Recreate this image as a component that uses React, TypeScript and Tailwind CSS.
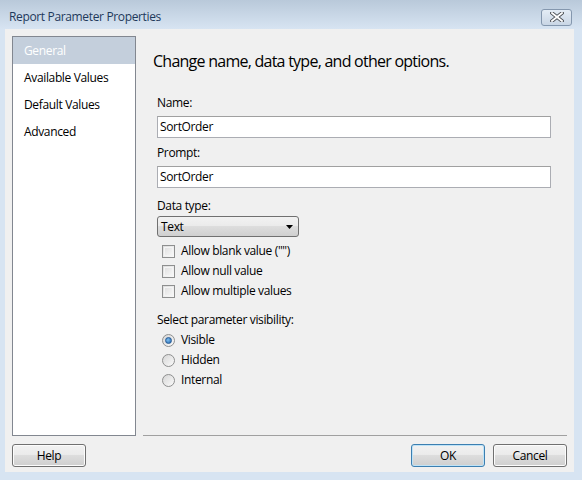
import React from "react";

const navItems = ["General", "Available Values", "Default Values", "Advanced"];

function Checkbox({ label }: { label: string }) {
  return (
    <div className="flex items-center h-[20px] pl-[5px]">
      <span className="w-[13px] h-[13px] border border-[#8e8f8f] bg-gradient-to-br from-[#dcdcdc] to-[#fbfbfb] p-[1px]">
        <span className="block w-full h-full border border-[#f4f4f4]" />
      </span>
      <span className="ml-[6px]">{label}</span>
    </div>
  );
}

function Radio({ label, checked }: { label: string; checked?: boolean }) {
  return (
    <div className="flex items-center h-[20px] pl-[5px]">
      <span className="w-[13px] h-[13px] rounded-full border border-[#8e8f8f] bg-gradient-to-br from-[#d6d6d6] to-[#fbfbfb] flex items-center justify-center">
        {checked && (
          <span className="w-[7px] h-[7px] rounded-full bg-[radial-gradient(circle_at_40%_40%,#7ec0f2,#1d5fa6)] border border-[#275b95]" />
        )}
      </span>
      <span className="ml-[6px]">{label}</span>
    </div>
  );
}

function Button({ label, primary }: { label: string; primary?: boolean }) {
  return (
    <button
      className={
        "w-[74px] h-[23px] rounded-[3px] border text-[12px] text-black bg-[linear-gradient(#f2f2f2_0%,#ebebeb_45%,#dddddd_50%,#cfcfcf_100%)] " +
        (primary ? "border-[#3c7fb1] shadow-[inset_0_0_0_1px_#bfe3f7]" : "border-[#707070] shadow-[inset_0_0_0_1px_#fcfcfc]")
      }
    >
      {label}
    </button>
  );
}

export default function App() {
  return (
    <div className="w-[582px] h-[480px] bg-[#d7e4f2] flex flex-col text-[12px] tracking-[-0.35px] text-black font-['Open_Sans','Noto_Sans',sans-serif] overflow-hidden">
      {/* Title bar */}
      <div className="h-[29px] bg-gradient-to-b from-[#b9c9da] to-[#d7e4f2] flex items-center justify-between pl-[9px] pr-[10px] shrink-0">
        <span className="text-[#1e395b] mt-[5px]">Report Parameter Properties</span>
        <button className="w-[31px] h-[17px] mt-[5px] rounded-[3px] border border-[#8497ae] bg-gradient-to-b from-[#e4ecf5] to-[#c9d6e5] flex items-center justify-center">
          <svg width="14" height="10" viewBox="0 0 14 10">
            <path d="M2 1 L12 9 M12 1 L2 9" stroke="#4b4f55" strokeWidth="3.6" strokeLinecap="square" />
            <path d="M2 1 L12 9 M12 1 L2 9" stroke="#ffffff" strokeWidth="1.8" strokeLinecap="square" />
          </svg>
        </button>
      </div>

      {/* Client area */}
      <div className="flex-1 ml-[5px] mr-[8px] mb-[8px] bg-[#f0f0f0] flex flex-col">
        <div className="flex pt-[7px] pl-[7px] pr-[7px]">
          {/* Sidebar */}
          <div className="w-[124px] h-[400px] border border-[#828790] bg-white shrink-0">
            {navItems.map((item, i) => (
              <div
                key={item}
                className={
                  "h-[27px] flex items-center pl-[11px] " + (i === 0 ? "bg-[#c4cfdc] text-white" : "")
                }
              >
                {item}
              </div>
            ))}
          </div>

          {/* Right panel */}
          <div className="flex-1 ml-[7px] h-[400px] border-b border-[#a0a0a0] flex flex-col">
            <div className="mt-[14px] ml-[10px] h-[22px] leading-[22px] text-[16px] tracking-[-0.75px]">
              Change name, data type, and other options.
            </div>

            <div className="ml-[14px] flex flex-col">
              <div className="mt-[23px] h-[16px] leading-[16px]">Name:</div>
              <div className="mt-[5px] w-[394px] h-[22px] border border-[#abadb3] border-t-[#a0a0a0] bg-white flex items-center pl-[2px]">
                SortOrder
              </div>

              <div className="mt-[7px] h-[16px] leading-[16px]">Prompt:</div>
              <div className="mt-[5px] w-[394px] h-[22px] border border-[#abadb3] border-t-[#a0a0a0] bg-white flex items-center pl-[2px]">
                SortOrder
              </div>

              <div className="mt-[10px] h-[16px] leading-[16px]">Data type:</div>
              <div className="mt-[2px] w-[142px] h-[21px] rounded-[3px] border border-[#707070] bg-[linear-gradient(#f2f2f2_0%,#ebebeb_45%,#dddddd_50%,#cfcfcf_100%)] flex items-center justify-between pl-[3px] pr-[5px]">
                <span>Text</span>
                <svg width="7" height="4" viewBox="0 0 7 4">
                  <path d="M0 0 H7 L3.5 4 Z" fill="#000" />
                </svg>
              </div>

              <div className="mt-[4px] flex flex-col">
                <Checkbox label='Allow blank value ("")' />
                <Checkbox label="Allow null value" />
                <Checkbox label="Allow multiple values" />
              </div>

              <div className="mt-[11px] h-[16px] leading-[16px]">Select parameter visibility:</div>
              <div className="mt-[2px] flex flex-col">
                <Radio label="Visible" checked />
                <Radio label="Hidden" />
                <Radio label="Internal" />
              </div>
            </div>
          </div>
        </div>

        {/* Footer */}
        <div className="flex items-center pl-[7px] pr-[7px] mt-[8px]">
          <Button label="Help" />
          <div className="flex-1" />
          <Button label="OK" primary />
          <div className="w-[8px]" />
          <Button label="Cancel" />
        </div>
      </div>
    </div>
  );
}
